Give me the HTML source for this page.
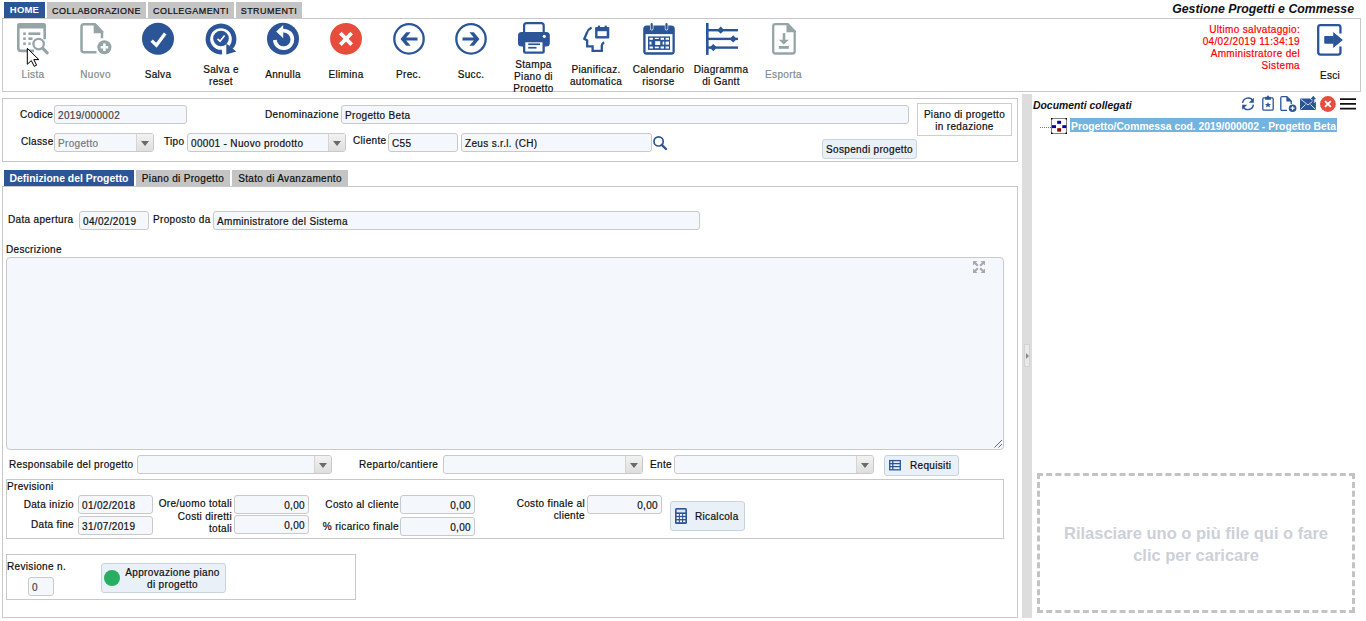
<!DOCTYPE html>
<html><head><meta charset="utf-8">
<style>
*{box-sizing:border-box;margin:0;padding:0}
html,body{width:1366px;height:621px;overflow:hidden;background:#fff;position:relative;font-family:"Liberation Sans",sans-serif;color:#222}
.a{position:absolute}
.t{position:absolute;margin-top:1px;white-space:nowrap;font-size:10px;letter-spacing:0.33px;-webkit-text-stroke:0.2px currentColor;line-height:12px;color:#0d0d0d}
.box{position:absolute;border:1px solid #c8c8c8}
.inp{position:absolute;border:1px solid #c9c9c9;border-radius:3px;background:#f4f8fd;height:19px}
.sel{position:absolute;border:1px solid #c9c9c9;border-radius:3px;background:#f4f8fd;height:19px;overflow:hidden}
.sel i{position:absolute;right:0;top:0;width:17px;height:17px;border-left:1px solid #d4d4d4;background:linear-gradient(#f2f2f2,#dedede)}
.sel i:after{content:"";position:absolute;left:4px;top:7px;border-left:4.5px solid transparent;border-right:4.5px solid transparent;border-top:5px solid #6a6a6a}
.btn{position:absolute;border:1px solid #c9d3dd;border-radius:3px;background:#e9f0f8}
.tab{position:absolute;background:#c4c4c4;font-size:10px;letter-spacing:0.33px;-webkit-text-stroke:0.2px currentColor;color:#0d0d0d;white-space:nowrap;text-align:center}
.tl{position:absolute;text-align:center;font-size:10px;line-height:12px;color:#1e1e1e;white-space:nowrap}
.gr{color:#7f8c8d}
.it{color:#111}
</style></head><body>

<!-- top tabs -->
<div class="tab" style="left:4px;top:2px;width:41px;height:16px;background:#2b5597;color:#fff;font-weight:bold;line-height:16px;font-size:9.5px;letter-spacing:0.2px;-webkit-text-stroke:0">HOME</div>
<div class="tab" style="left:47px;top:2px;width:99px;height:16px;line-height:18px;font-size:9px;letter-spacing:0.45px">COLLABORAZIONE</div>
<div class="tab" style="left:148px;top:2px;width:86px;height:16px;line-height:18px;font-size:9px;letter-spacing:0.45px">COLLEGAMENTI</div>
<div class="tab" style="left:236px;top:2px;width:66px;height:16px;line-height:18px;font-size:9px;letter-spacing:0.45px">STRUMENTI</div>

<div class="t" style="right:12px;top:2px;font-size:12.3px;line-height:15px;font-weight:bold;font-style:italic;color:#111;letter-spacing:0;-webkit-text-stroke:0;margin-top:0">Gestione Progetti e Commesse</div>

<!-- toolbar box -->
<div class="box" style="left:2px;top:18px;width:1359px;height:74px"></div>


<!-- toolbar labels -->
<div class="t" style="left:-2.0px;top:68px;width:70px;text-align:center;color:#7f8c8d;">Lista</div>
<div class="t" style="left:60.5px;top:68px;width:70px;text-align:center;color:#7f8c8d;">Nuovo</div>
<div class="t" style="left:123.0px;top:68px;width:70px;text-align:center;">Salva</div>
<div class="t" style="left:186.0px;top:63px;width:70px;text-align:center;">Salva e<br>reset</div>
<div class="t" style="left:248.0px;top:68px;width:70px;text-align:center;">Annulla</div>
<div class="t" style="left:311.0px;top:68px;width:70px;text-align:center;">Elimina</div>
<div class="t" style="left:373.5px;top:68px;width:70px;text-align:center;">Prec.</div>
<div class="t" style="left:436.0px;top:68px;width:70px;text-align:center;">Succ.</div>
<div class="t" style="left:498.5px;top:58px;width:70px;text-align:center;height:33px;overflow:hidden;">Stampa<br>Piano di<br>Progetto</div>
<div class="t" style="left:561.0px;top:63px;width:70px;text-align:center;">Pianificaz.<br>automatica</div>
<div class="t" style="left:623.5px;top:63px;width:70px;text-align:center;">Calendario<br>risorse</div>
<div class="t" style="left:686.0px;top:63px;width:70px;text-align:center;">Diagramma<br>di Gantt</div>
<div class="t" style="left:748.5px;top:68px;width:70px;text-align:center;color:#7f8c8d;">Esporta</div>
<div class="t" style="left:1300px;top:69px;width:60px;text-align:center">Esci</div>
<div class="t" style="right:66px;top:23px;text-align:right;color:#ff0000">Ultimo salvataggio:<br>04/02/2019 11:34:19<br>Amministratore del<br>Sistema</div>

<!-- form header box -->
<div class="box" style="left:2px;top:98px;width:1016px;height:64px"></div>


<!-- header form -->
<div class="t" style="left:20px;top:108px">Codice</div>
<div class="inp" style="left:54px;top:105px;width:133px"></div>
<div class="t it" style="left:58px;top:109px;color:#444">2019/000002</div>
<div class="t" style="left:265px;top:108px">Denominazione</div>
<div class="inp" style="left:341px;top:105px;width:568px"></div>
<div class="t it" style="left:345px;top:109px">Progetto Beta</div>
<div class="box" style="left:917px;top:103px;width:95px;height:33px;border-color:#cfcfcf"></div>
<div class="t" style="left:917px;top:108px;width:95px;text-align:center">Piano di progetto</div>
<div class="t" style="left:917px;top:120px;width:95px;text-align:center">in redazione</div>

<div class="t" style="left:21px;top:135px">Classe</div>
<div class="sel" style="left:54px;top:133px;width:100px"><i></i></div>
<div class="t it" style="left:58px;top:137px;color:#777">Progetto</div>
<div class="t" style="left:164px;top:135px">Tipo</div>
<div class="sel" style="left:187px;top:133px;width:159px"><i></i></div>
<div class="t it" style="left:191px;top:137px">00001 - Nuovo prodotto</div>
<div class="t" style="left:353px;top:134px">Cliente</div>
<div class="inp" style="left:388px;top:133px;width:70px"></div>
<div class="t it" style="left:392px;top:137px">C55</div>
<div class="inp" style="left:461px;top:133px;width:191px"></div>
<div class="t it" style="left:465px;top:137px">Zeus s.r.l. (CH)</div>
<div class="btn" style="left:822px;top:139px;width:95px;height:20px"></div>
<div class="t" style="left:822px;top:143px;width:95px;text-align:center">Sospendi progetto</div>

<!-- tabs -->
<div class="tab" style="left:4px;top:170px;width:130px;height:16px;line-height:18px;background:#2b5597;color:#fff;font-weight:bold;font-size:10.4px;letter-spacing:0;-webkit-text-stroke:0">Definizione del Progetto</div>
<div class="tab" style="left:136px;top:170px;width:94px;height:16px;line-height:18px">Piano di Progetto</div>
<div class="tab" style="left:232px;top:170px;width:116px;height:16px;line-height:18px">Stato di Avanzamento</div>

<!-- tab content box -->
<div class="box" style="left:2px;top:186px;width:1016px;height:432px"></div>


<!-- tab content -->
<div class="t" style="left:8px;top:213px">Data apertura</div>
<div class="inp" style="left:79px;top:211px;width:70px"></div>
<div class="t it" style="left:83px;top:215px">04/02/2019</div>
<div class="t" style="left:153px;top:213px">Proposto da</div>
<div class="inp" style="left:213px;top:211px;width:487px"></div>
<div class="t it" style="left:217px;top:215px">Amministratore del Sistema</div>
<div class="t" style="left:6px;top:243px">Descrizione</div>
<div class="inp" style="left:6px;top:257px;width:998px;height:193px;border-radius:4px"></div>

<div class="t" style="left:9px;top:458px">Responsabile del progetto</div>
<div class="sel" style="left:137px;top:455px;width:195px"><i></i></div>
<div class="t" style="left:359px;top:458px">Reparto/cantiere</div>
<div class="sel" style="left:443px;top:455px;width:200px"><i></i></div>
<div class="t" style="left:650px;top:458px">Ente</div>
<div class="sel" style="left:674px;top:455px;width:200px"><i></i></div>
<div class="btn" style="left:884px;top:455px;width:75px;height:21px"></div>
<div class="t" style="left:910px;top:459px">Requisiti</div>

<div class="box" style="left:6px;top:479px;width:998px;height:60px"></div>
<div class="t" style="left:7px;top:480px">Previsioni</div>
<div class="t" style="left:0;width:74px;text-align:right;top:498px">Data inizio</div>
<div class="inp" style="left:78px;top:495px;width:75px"></div>
<div class="t it" style="left:82px;top:499px">01/02/2018</div>
<div class="t" style="left:0;width:74px;text-align:right;top:518px">Data fine</div>
<div class="inp" style="left:78px;top:516px;width:75px"></div>
<div class="t it" style="left:82px;top:520px">31/07/2019</div>

<div class="t" style="left:100px;width:132px;text-align:right;top:497px">Ore/uomo totali</div>
<div class="inp" style="left:234px;top:495px;width:75px"></div>
<div class="t it" style="left:234px;width:71px;text-align:right;top:499px">0,00</div>
<div class="t" style="left:100px;width:132px;text-align:right;top:510px">Costi diretti<br>totali</div>
<div class="inp" style="left:234px;top:515px;width:75px"></div>
<div class="t it" style="left:234px;width:71px;text-align:right;top:519px">0,00</div>

<div class="t" style="left:260px;width:139px;text-align:right;top:498px">Costo al cliente</div>
<div class="inp" style="left:400px;top:495px;width:75px"></div>
<div class="t it" style="left:400px;width:71px;text-align:right;top:499px">0,00</div>
<div class="t" style="left:260px;width:139px;text-align:right;top:520px">% ricarico finale</div>
<div class="inp" style="left:400px;top:517px;width:75px"></div>
<div class="t it" style="left:400px;width:71px;text-align:right;top:521px">0,00</div>

<div class="t" style="left:480px;width:105px;text-align:right;top:497px">Costo finale al<br>cliente</div>
<div class="inp" style="left:587px;top:495px;width:75px"></div>
<div class="t it" style="left:587px;width:71px;text-align:right;top:499px">0,00</div>
<div class="btn" style="left:670px;top:501px;width:75px;height:30px"></div>
<div class="t" style="left:695px;top:510px">Ricalcola</div>

<div class="box" style="left:6px;top:554px;width:350px;height:46px"></div>
<div class="t" style="left:7px;top:560px">Revisione n.</div>
<div class="inp" style="left:28px;top:577px;width:26px"></div>
<div class="t it" style="left:32px;top:581px;color:#444">0</div>
<div class="btn" style="left:101px;top:563px;width:125px;height:30px"></div>
<div class="a" style="left:104px;top:570px;width:16px;height:16px;border-radius:50%;background:#27ae60"></div>
<div class="t" style="left:122px;width:101px;text-align:center;top:566px">Approvazione piano<br>di progetto</div>

<!-- right panel -->
<div class="t" style="left:1033px;top:100px;font-weight:bold;font-style:italic;font-size:10.4px;color:#111;letter-spacing:0;-webkit-text-stroke:0;margin-top:0">Documenti collegati</div>
<div class="a" style="left:1070px;top:118px;width:267px;height:14px;background:#73b3e0"></div>
<div class="t" style="left:1071px;top:120.5px;font-weight:bold;font-size:10.35px;color:#fff;letter-spacing:0;-webkit-text-stroke:0;margin-top:0">Progetto/Commessa cod. 2019/000002 - Progetto Beta</div>
<div class="t" style="left:1037px;top:473px;width:318px;height:140px;text-align:center;font-weight:bold;font-size:16.5px;line-height:22px;color:#cdd0d7;padding-top:49px;letter-spacing:0;-webkit-text-stroke:0;margin-top:0">Rilasciare uno o più file qui o fare<br>clic per caricare</div>

<!-- splitter -->
<div class="a" style="left:1022px;top:94px;width:10px;height:524px;background:#dddddd"></div>
<div class="a" style="left:1024px;top:344px;width:6px;height:23px;background:#e9e9e9;border:1px solid #d2d2d2"></div>
<div class="a" style="left:1026px;top:353px;border-top:3px solid transparent;border-bottom:3px solid transparent;border-left:3.5px solid #888"></div>


<!-- icons overlay -->
<svg class="a" style="left:0;top:0" width="1366" height="621" viewBox="0 0 1366 621">
<!-- Lista -->
<g fill="#95a5a6" stroke="none">
<path d="M34,50.9 H21 Q18.3,50.9 18.3,48.2 V26 H44.7 V39.3" fill="none" stroke="#95a5a6" stroke-width="2.6"/>
<rect x="17" y="23" width="29" height="5.4" rx="2.2"/>
<rect x="23.2" y="32.4" width="2.6" height="2.6"/><rect x="28.4" y="32.4" width="11.9" height="2.6"/>
<rect x="23.2" y="37.4" width="2.6" height="2.6"/><rect x="28.4" y="37.4" width="4.1" height="2.6"/>
<rect x="23.2" y="42.4" width="2.6" height="2.6"/><rect x="28.4" y="42.4" width="2.2" height="2.6"/>
<circle cx="38.6" cy="44.1" r="5.2" fill="none" stroke="#95a5a6" stroke-width="2.3"/>
<path d="M42.6,48.2 L47.2,52.8" stroke="#95a5a6" stroke-width="3.2" stroke-linecap="round"/>
</g>
<!-- Nuovo -->
<g fill="#95a5a6">
<path d="M96.5,52.3 H84 Q81.5,52.3 81.5,49.8 V26.8 Q81.5,24.3 84,24.3 H94.5 L102,32 V38.3" fill="none" stroke="#95a5a6" stroke-width="2.5"/>
<path d="M93.7,23.1 H95.2 L103.2,31.3 V33.3 H93.7 Z"/>
<circle cx="104.4" cy="47.2" r="7"/>
<rect x="100.6" y="46" width="7.6" height="2.5" fill="#fff"/><rect x="103.15" y="43.4" width="2.5" height="7.6" fill="#fff"/>
</g>
<!-- Salva -->
<circle cx="158" cy="38.8" r="16" fill="#2b5597"/>
<path d="M151.6,40.6 L156.4,45.2 L165.2,33.4" fill="none" stroke="#fff" stroke-width="3.3"/>
<!-- Salva e reset -->
<path d="M222,52.06 A13.1,13.1 0 1 1 230.98,47.5" fill="none" stroke="#2b5597" stroke-width="4.6"/>
<path d="M226.3,43.6 L236.3,51.6 L226.3,54.6 Z" fill="#2b5597"/>
<circle cx="221" cy="38.5" r="7.8" fill="#2b5597"/>
<path d="M217.5,38.8 L220,41.2 L224.6,35.4" fill="none" stroke="#fff" stroke-width="1.6"/>
<!-- Annulla -->
<circle cx="283" cy="38.8" r="16" fill="#2b5597"/>
<path d="M274.8,40 A8.8,8.8 0 1 0 283,30.6" fill="none" stroke="#fff" stroke-width="3.7"/>
<path d="M276.2,31.6 L283.2,24.9 L283.2,38.3 Z" fill="#fff"/>
<!-- Elimina -->
<circle cx="346" cy="38.8" r="15.9" fill="#e74c3c"/>
<path d="M340.3,33 L351.7,44.6 M351.7,33 L340.3,44.6" stroke="#fff" stroke-width="3.8"/>
<!-- Prec -->
<circle cx="409" cy="38.9" r="14.7" fill="none" stroke="#2b5597" stroke-width="2.3"/>
<path d="M400.5,39 L406.2,32.2 H410.6 L406.2,37.4 H417.5 V40.6 H406.2 L410.6,45.8 H406.2 Z" fill="#2b5597"/>
<!-- Succ -->
<circle cx="471" cy="38.9" r="14.7" fill="none" stroke="#2b5597" stroke-width="2.3"/>
<path d="M479.5,39 L473.8,32.2 H469.4 L473.8,37.4 H462.5 V40.6 H473.8 L469.4,45.8 H473.8 Z" fill="#2b5597"/>
<!-- Stampa -->
<g fill="#2b5597">
<rect x="524.1" y="23.1" width="19.6" height="12" rx="2.5" fill="none" stroke="#2b5597" stroke-width="2.2"/>
<rect x="518" y="31.9" width="31.8" height="14.5" rx="3.5"/>
<rect x="523" y="40" width="21.8" height="13.8" rx="2.5"/>
<rect x="525.3" y="42.3" width="17.2" height="9.2" fill="#fff"/>
<circle cx="544.3" cy="36.3" r="1.6" fill="#fff"/>
<rect x="528.2" y="43.4" width="11.8" height="1.7"/><rect x="528.2" y="46.9" width="8.3" height="1.7"/>
</g>
<!-- Pianificaz -->
<path d="M591.6,27.6 Q588,29.5 586.8,33 L584.3,38.8 L587.2,40.4 V46.4 H592.6 V50.9 H601.8 V45.7 Q602,43.6 604,42.2" fill="none" stroke="#2b5597" stroke-width="2.3" stroke-linejoin="miter"/>
<rect x="595.1" y="27" width="14.2" height="11.6" rx="1" fill="#2b5597"/>
<rect x="597.5" y="31.2" width="9.2" height="4.9" fill="#fff"/>
<rect x="597.8" y="25.6" width="2.2" height="2" fill="#2b5597"/><rect x="604.6" y="25.6" width="2.2" height="2" fill="#2b5597"/>
<!-- Calendario -->
<g>
<rect x="643.2" y="25.4" width="31.6" height="29.3" rx="3.5" fill="#2b5597"/>
<rect x="645.6" y="34.1" width="26.9" height="18.1" fill="#fff"/>
<rect x="648" y="36.4" width="22" height="13.5" fill="#2b5597"/>
<g fill="#fff">
<rect x="649.5" y="37.8" width="3.4" height="2"/><rect x="654.8" y="37.8" width="4" height="1.2"/><rect x="660.6" y="37.8" width="3.4" height="2"/><rect x="665.6" y="37.8" width="3.4" height="2"/>
<rect x="649.5" y="41.6" width="2" height="3"/><rect x="655.2" y="41.2" width="5" height="3.8"/><rect x="662.6" y="41.6" width="1.6" height="3"/><rect x="665.6" y="41.6" width="3.4" height="3"/>
<rect x="649.5" y="46.5" width="3.4" height="2"/><rect x="654.8" y="46.6" width="4" height="1.6"/><rect x="660.6" y="46.5" width="3.4" height="2"/><rect x="665.6" y="46.5" width="3.4" height="2"/>
</g>
<rect x="650" y="22.6" width="3.4" height="7.8" rx="1.7" fill="#fff"/><rect x="664.8" y="22.6" width="3.4" height="7.8" rx="1.7" fill="#fff"/>
<rect x="650.6" y="23" width="2.2" height="6.8" rx="1.1" fill="#2b5597"/><rect x="665.4" y="23" width="2.2" height="6.8" rx="1.1" fill="#2b5597"/>
</g>
<!-- Gantt -->
<g fill="#2b5597">
<rect x="706" y="23" width="2.6" height="31.9"/>
<rect x="708" y="29" width="30" height="2.4"/><rect x="708" y="37.7" width="30" height="2.4"/><rect x="708" y="46.4" width="30" height="2.4"/>
<path d="M720.7,26.6 L724.3,30.2 L720.7,33.8 L717.1,30.2 Z"/>
<path d="M733.2,35.3 L736.8,38.9 L733.2,42.5 L729.6,38.9 Z"/>
<path d="M713.3,44 L716.9,47.6 L713.3,51.2 L709.7,47.6 Z"/>
</g>
<!-- Esporta -->
<g fill="#95a5a6">
<path d="M787.5,24.2 H775.5 Q773.2,24.2 773.2,26.5 V51.2 Q773.2,53.5 775.5,53.5 H792.4 Q794.7,53.5 794.7,51.2 V31.8 Z" fill="none" stroke="#95a5a6" stroke-width="2.3"/>
<path d="M786.5,23 H788 L795.9,31 V32.2 H786.5 Z"/>
<rect x="782.7" y="33.1" width="2.6" height="7.2"/>
<path d="M778.8,39.8 H788.8 L783.8,44.6 Z"/>
<rect x="778.8" y="46" width="10" height="2.8"/>
</g>
<!-- Esci -->
<path d="M1340.45,33.5 V27.5 Q1340.45,25.2 1338.2,25.2 H1320.5 Q1318.2,25.2 1318.2,27.5 V52.3 Q1318.2,54.6 1320.5,54.6 H1338.2 Q1340.45,54.6 1340.45,52.3 V46.4" fill="none" stroke="#2b5597" stroke-width="2.3"/>
<rect x="1324.2" y="36" width="9.5" height="7.8" rx="0.8" fill="#2b5597"/>
<path d="M1333.2,31.9 L1342.9,39.9 L1333.2,48 Z" fill="#2b5597"/>

<!-- magnifier -->
<circle cx="658.6" cy="141.4" r="4.6" fill="none" stroke="#2b5597" stroke-width="1.7"/>
<path d="M661.8,144.8 L666,149" stroke="#2b5597" stroke-width="2.4" stroke-linecap="round"/>
<!-- expand icon -->
<g fill="#a9a9a9">
<path d="M973,261 H977.5 L976,262.5 L978.6,265.1 L977.1,266.6 L974.5,264 L973,265.5 Z"/>
<path d="M985,261 H980.5 L982,262.5 L979.4,265.1 L980.9,266.6 L983.5,264 L985,265.5 Z"/>
<path d="M973,273 H977.5 L976,271.5 L978.6,268.9 L977.1,267.4 L974.5,270 L973,268.5 Z"/>
<path d="M985,273 H980.5 L982,271.5 L979.4,268.9 L980.9,267.4 L983.5,270 L985,268.5 Z"/>
</g>
<!-- resize grip -->
<path d="M994.5,447.5 L1002,440 M998.5,447.5 L1002,444" stroke="#555" stroke-width="0.9"/>
<!-- requisiti icon -->
<g fill="none" stroke="#2b5597" stroke-width="1.3">
<rect x="889.7" y="460.6" width="10.6" height="9.2"/>
<path d="M889.7,463.6 H900.3 M889.7,466.7 H900.3 M892.8,460.6 V469.8"/>
</g>
<!-- calculator icon -->
<rect x="675" y="508" width="12" height="16" rx="1.5" fill="#2b5597"/>
<rect x="676.6" y="509.6" width="8.8" height="2.8" fill="#dfe6f0"/>
<g fill="#fff">
<rect x="676.6" y="514" width="2.2" height="1.8"/><rect x="679.9" y="514" width="2.2" height="1.8"/><rect x="683.2" y="514" width="2.2" height="1.8"/>
<rect x="676.6" y="517.2" width="2.2" height="1.8"/><rect x="679.9" y="517.2" width="2.2" height="1.8"/><rect x="683.2" y="517.2" width="2.2" height="1.8"/>
<rect x="676.6" y="520.4" width="2.2" height="1.8"/><rect x="679.9" y="520.4" width="2.2" height="1.8"/><rect x="683.2" y="520.4" width="2.2" height="1.8"/>
</g>
<!-- right panel icons -->
<g fill="none" stroke="#2b5597" stroke-width="1.4">
<path d="M1242.6,103 A5.6,5.6 0 0 1 1253,100.8"/>
<path d="M1253.4,104.6 A5.6,5.6 0 0 1 1243,106.8"/>
</g>
<path d="M1253.8,97.8 V102.8 H1248.8 Z" fill="#2b5597"/>
<path d="M1242.2,109.8 V104.8 H1247.2 Z" fill="#2b5597"/>
<rect x="1262.8" y="97.9" width="10.4" height="12.3" rx="1" fill="none" stroke="#2b5597" stroke-width="1.3"/>
<path d="M1265.2,96.8 H1270.8 V99.8 H1265.2 Z" fill="#2b5597"/>
<circle cx="1268" cy="96.4" r="1" fill="#2b5597"/>
<path d="M1268,102 L1268.9,104 L1271,104.1 L1269.4,105.4 L1270,107.4 L1268,106.3 L1266,107.4 L1266.6,105.4 L1265,104.1 L1267.1,104 Z" fill="#2b5597"/>
<path d="M1287,110.4 H1282 Q1280.8,110.4 1280.8,109.2 V97.9 Q1280.8,96.7 1282,96.7 H1286.8 L1291.2,101.1 V104" fill="none" stroke="#2b5597" stroke-width="1.3"/>
<path d="M1286.4,96.2 L1291.8,101.6 H1286.4 Z" fill="#2b5597"/>
<circle cx="1292.6" cy="108.2" r="3.8" fill="#2b5597"/>
<path d="M1290.6,108.2 H1294.6 M1292.6,106.2 V110.2" stroke="#fff" stroke-width="1.2"/>
<path d="M1300,98.4 H1310 L1314.5,103 L1315.9,101.6 V109.9 H1300 Z" fill="#2b5597"/>
<path d="M1300.5,99 L1308,105 L1315.5,99 M1300.5,109.5 L1305.5,104.5 M1315.5,109.5 L1310.5,104.5" fill="none" stroke="#fff" stroke-width="0.8"/>
<path d="M1313.3,95.8 L1316.2,99.2 H1314.3 V102.5 H1312.3 V99.2 H1310.4 Z" fill="#2b5597"/>
<circle cx="1327.9" cy="104" r="7.9" fill="#e74c3c"/>
<path d="M1325,101.1 L1330.8,106.9 M1330.8,101.1 L1325,106.9" stroke="#fff" stroke-width="2"/>
<path d="M1340,99.1 H1356 M1340,103.9 H1356 M1340,108.6 H1356" stroke="#111" stroke-width="1.7"/>
<!-- tree -->
<path d="M1040,127.5 H1051" stroke="#777" stroke-width="1" stroke-dasharray="1,1"/>
<rect x="1051.5" y="118.5" width="15" height="15" fill="#fff" stroke="#808080" stroke-width="1"/>
<rect x="1051" y="118" width="1.5" height="1.5" fill="#000"/><rect x="1065.5" y="118" width="1.5" height="1.5" fill="#000"/>
<rect x="1051" y="132.5" width="1.5" height="1.5" fill="#000"/><rect x="1065.5" y="132.5" width="1.5" height="1.5" fill="#000"/>
<rect x="1057.2" y="120.8" width="3.9" height="3" fill="#0000b0"/>
<rect x="1052" y="125.2" width="4" height="2.9" fill="#0000b0"/>
<rect x="1062.3" y="125.2" width="4" height="2.9" fill="#0000b0"/>
<rect x="1057.2" y="128.2" width="3.9" height="3.4" fill="#8b0000"/>
<!-- drop zone dashed -->
<g fill="none" stroke="#c3c3c3" stroke-width="3">
<path d="M1037,474.5 H1355" stroke-dasharray="6,3.1765"/>
<path d="M1037,611.5 H1355" stroke-dasharray="6,3.1765"/>
<path d="M1038.5,473 V613" stroke-dasharray="6,2.9333"/>
<path d="M1353.5,473 V613" stroke-dasharray="6,2.9333"/>
</g>

<!-- cursor -->
<path d="M27.3,48.3 V64.3 L31.3,60.6 L34.2,66.3 L36.6,65.2 L33.8,59.6 L38.8,59.6 Z" fill="#fff" stroke="#000" stroke-width="1" stroke-linejoin="round"/>
</svg>

</body></html>
